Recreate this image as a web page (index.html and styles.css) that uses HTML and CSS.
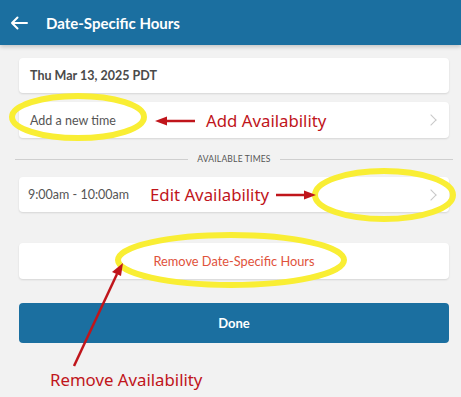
FILE: index.html
```html
<!DOCTYPE html>
<html lang="en">
<head>
    <meta charset="UTF-8">
    <meta name="viewport" content="width=device-width, initial-scale=1.0">
    <title>Date-Specific Hours</title>
    <link rel="stylesheet" href="styles.css">
</head>
<body>
    <header class="top-bar">
        <span class="back-arrow">
            <svg width="18" height="14" viewBox="0 0 18 14"><path d="M17 7H2M7.5 1.5L2 7l5.5 5.5" fill="none" stroke="#fff" stroke-width="2" stroke-linecap="round" stroke-linejoin="round"/></svg>
        </span>
        <h1 class="title">Date-Specific Hours</h1>
    </header>

    <main class="content">
        <div class="card date-card">Thu Mar 13, 2025 PDT</div>

        <div class="card row-card">
            <span class="row-label">Add a new time</span>
            <span class="chevron"></span>
        </div>

        <div class="section-divider">
            <span class="line"></span>
            <span class="section-title">AVAILABLE TIMES</span>
            <span class="line"></span>
        </div>

        <div class="card row-card time-card">
            <span class="row-label">9:00am - 10:00am</span>
            <span class="chevron"></span>
        </div>

        <div class="card remove-card">Remove Date-Specific Hours</div>

        <button class="done-button">Done</button>
    </main>

    <!-- Annotations drawn over the screenshot -->
    <svg class="annotations" width="461" height="397" viewBox="0 0 461 397">
        <ellipse cx="78" cy="117" rx="66" ry="21" fill="none" stroke="#f9ee34" stroke-width="6"/>
        <ellipse cx="384" cy="195" rx="69" ry="24" fill="none" stroke="#f9ee34" stroke-width="6"/>
        <ellipse cx="231" cy="260" rx="113" ry="25" fill="none" stroke="#f9ee34" stroke-width="6"/>

        <line x1="195" y1="121" x2="164" y2="121" stroke="#c0151b" stroke-width="2.5"/>
        <path d="M155 121L167 116.5L167 125.5z" fill="#c0151b"/>

        <line x1="276" y1="195" x2="306" y2="195" stroke="#c0151b" stroke-width="2.5"/>
        <path d="M316 195L304 190.5L304 199.5z" fill="#c0151b"/>

        <line x1="74" y1="366" x2="117" y2="274" stroke="#c0151b" stroke-width="2.5"/>
        <path d="M123 263L112 272L121 276z" fill="#c0151b"/>

        <text x="206" y="127" class="note">Add Availability</text>
        <text x="150" y="201" class="note">Edit Availability</text>
        <text x="50" y="386" class="note">Remove Availability</text>
    </svg>
</body>
</html>
```

FILE: styles.css
```css
:root {
    --blue: #1b6fa0;
    --page-bg: #f2f2f2;
    --text: #454545;
    --note-red: #c0151b;
}

body {
    margin: 0;
    width: 461px;
    height: 397px;
    overflow: hidden;
    position: relative;
    background-color: var(--page-bg);
    font-family: 'Lato', 'Noto Sans', sans-serif;
    color: var(--text);
}

.top-bar {
    height: 45px;
    background-color: var(--blue);
    display: flex;
    align-items: center;
    padding-left: 10px;
    box-shadow: 0 2px 4px rgba(0, 0, 0, 0.18);
}

.back-arrow {
    display: flex;
    width: 36px;
}

.title {
    margin: 0;
    color: #fff;
    font-size: 15px;
    font-weight: 700;
}

.content {
    display: flex;
    flex-direction: column;
    padding: 13px 12px 0 19px;
}

.card {
    background-color: #fff;
    border-radius: 4px;
    box-shadow: 0 1px 2px rgba(0, 0, 0, 0.12);
    box-sizing: border-box;
}

.date-card {
    height: 35px;
    display: flex;
    align-items: center;
    padding-left: 11px;
    font-size: 12.5px;
    font-weight: 700;
    color: #4a4a4a;
}

.row-card {
    height: 36px;
    margin-top: 9px;
    display: flex;
    align-items: center;
    justify-content: space-between;
    padding: 0 14px 0 11px;
}

.row-label {
    font-size: 12.5px;
    color: #555;
}

.chevron {
    width: 7px;
    height: 7px;
    border-top: 1.5px solid #c8c8c8;
    border-right: 1.5px solid #c8c8c8;
    transform: rotate(45deg);
}

.section-divider {
    display: flex;
    align-items: center;
    gap: 9px;
    margin: 14px -4px 0 -4px;
    height: 14px;
}

.line {
    flex: 1;
    height: 1px;
    background-color: #cfcfcf;
}

.section-title {
    font-size: 8.5px;
    color: #555;
    letter-spacing: 0.2px;
}

.time-card {
    margin-top: 11px;
    height: 35px;
    padding-left: 9px;
}

.remove-card {
    margin-top: 31px;
    height: 36px;
    display: flex;
    align-items: center;
    justify-content: center;
    font-size: 12.8px;
    color: #e0523b;
}

.done-button {
    margin-top: 24px;
    height: 40px;
    border: none;
    border-radius: 4px;
    background-color: var(--blue);
    color: #fff;
    font-family: inherit;
    font-size: 13px;
    font-weight: 700;
}

.annotations {
    position: absolute;
    top: 0;
    left: 0;
    pointer-events: none;
}

.note {
    font-family: 'Noto Sans', sans-serif;
    font-size: 16.8px;
    fill: var(--note-red);
}
```
